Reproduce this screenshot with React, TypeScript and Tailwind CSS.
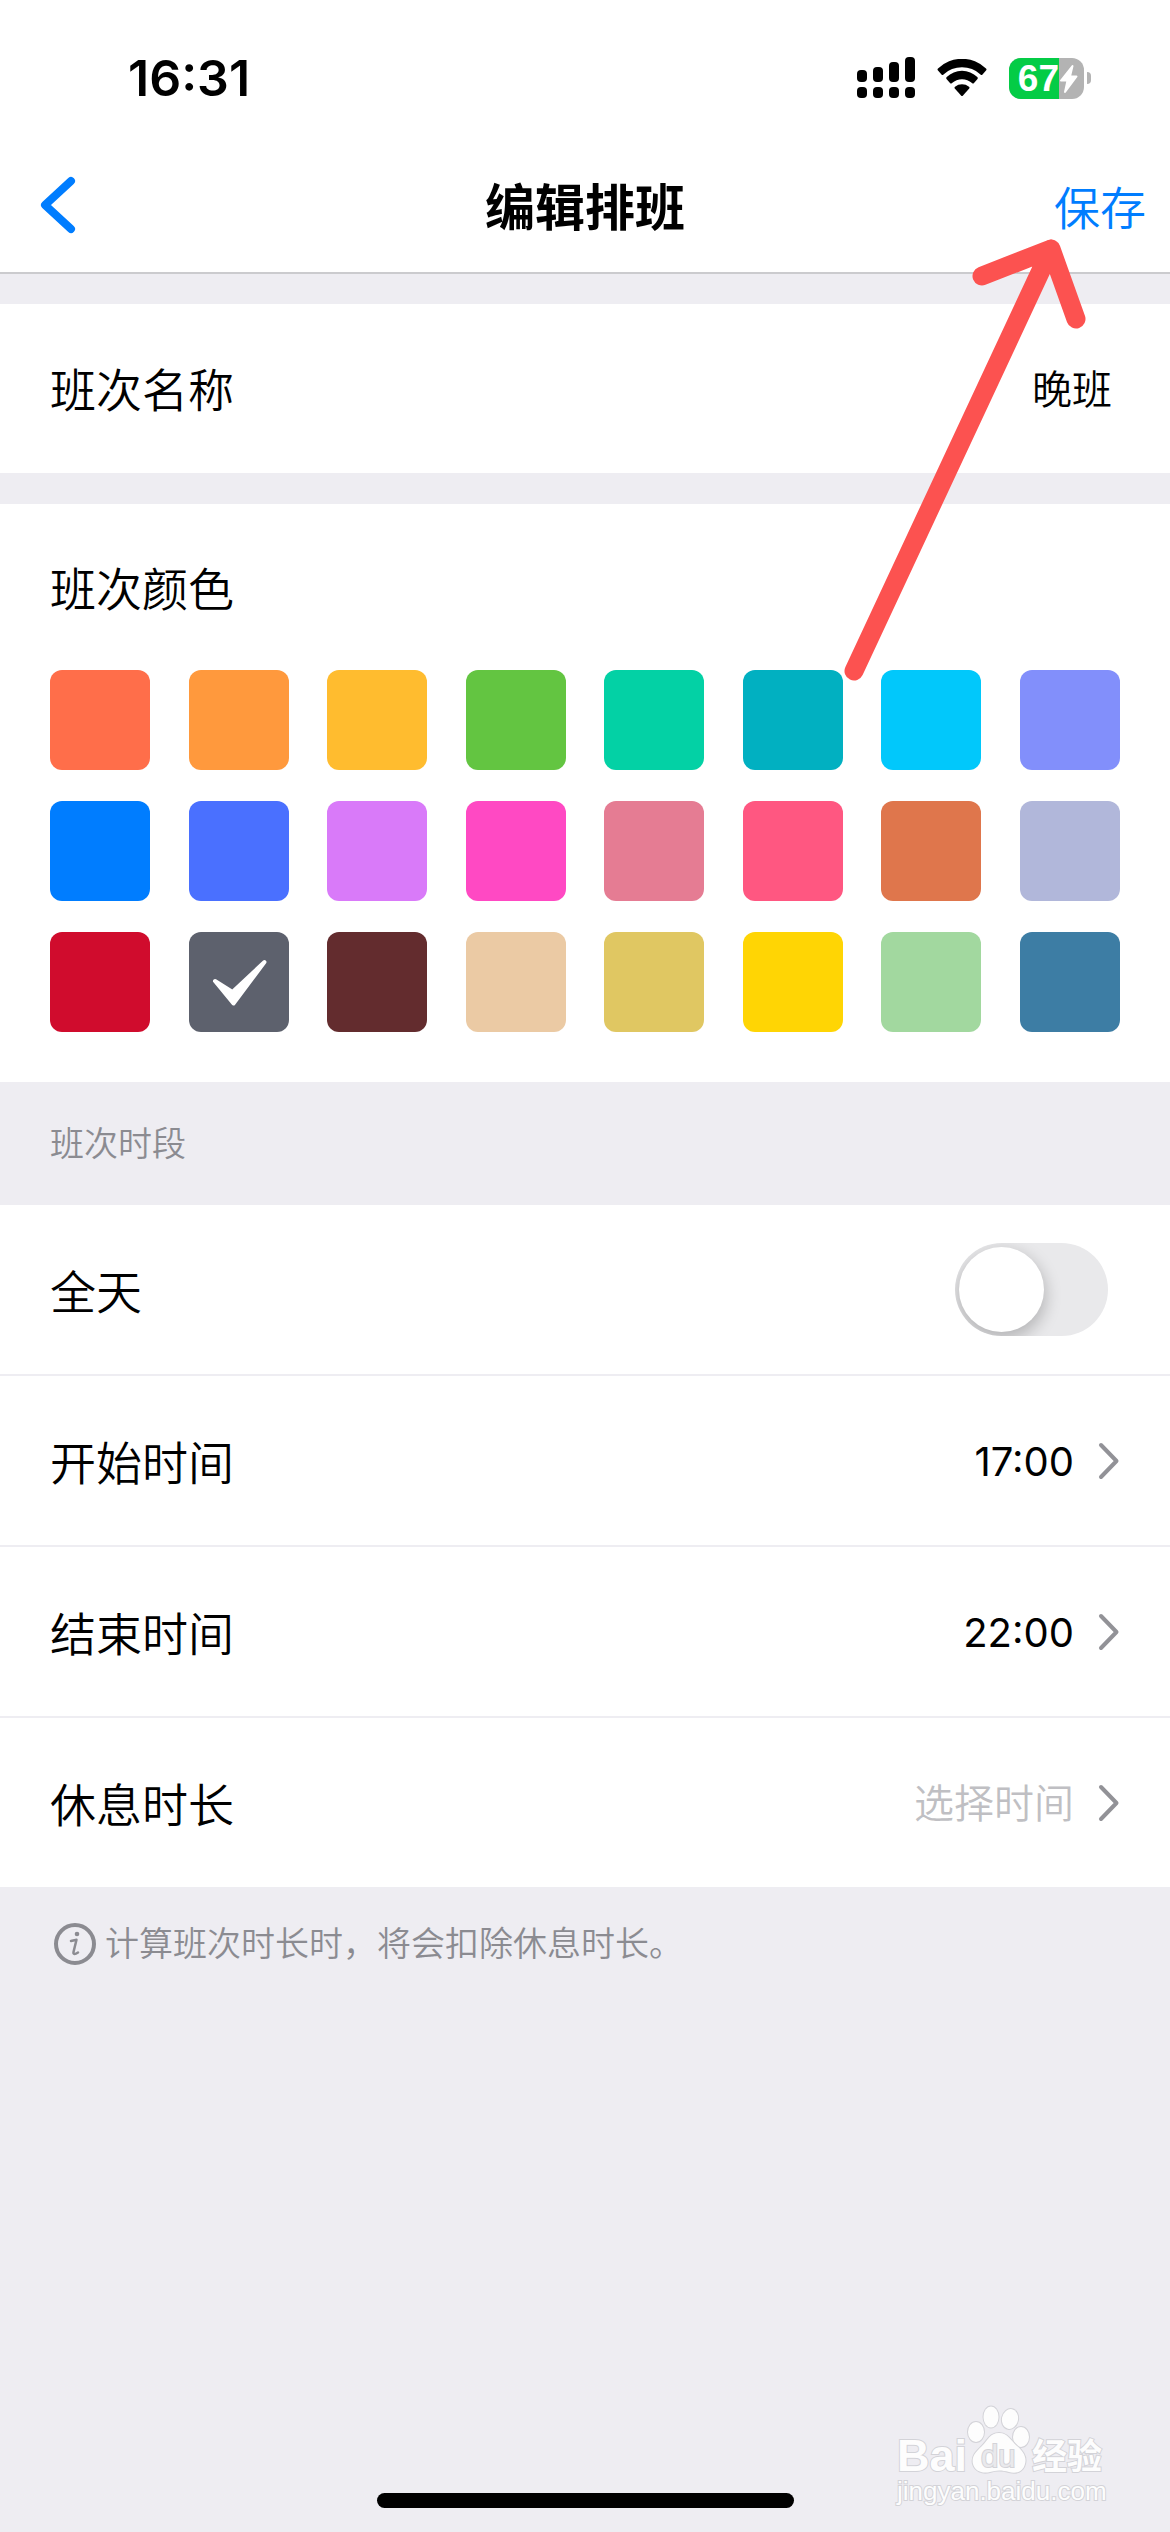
import { useState } from "react";
import type { ReactNode } from "react";
import { clsx } from "clsx";

const COLORS = [
  { name: "珊瑚红", className: "bg-[#ff6e4a]" },
  { name: "橙色", className: "bg-[#ff993d]" },
  { name: "琥珀", className: "bg-[#ffbc2f]" },
  { name: "绿色", className: "bg-[#63c541]" },
  { name: "薄荷绿", className: "bg-[#03d1a5]" },
  { name: "青色", className: "bg-[#01b0c1]" },
  { name: "天蓝", className: "bg-[#01c8fb]" },
  { name: "浅紫蓝", className: "bg-[#828ffb]" },
  { name: "蓝色", className: "bg-[#007dff]" },
  { name: "靛蓝", className: "bg-[#4a70ff]" },
  { name: "紫色", className: "bg-[#d97af9]" },
  { name: "洋红", className: "bg-[#ff49c3]" },
  { name: "豆沙粉", className: "bg-[#e57c93]" },
  { name: "玫红", className: "bg-[#ff5781]" },
  { name: "赭色", className: "bg-[#df764c]" },
  { name: "灰紫", className: "bg-[#b1b7da]" },
  { name: "深红", className: "bg-[#d00c2d]" },
  { name: "深灰", className: "bg-[#5d616d]" },
  { name: "棕色", className: "bg-[#632c2e]" },
  { name: "米色", className: "bg-[#ebcaa4]" },
  { name: "土黄", className: "bg-[#e0c762]" },
  { name: "黄色", className: "bg-[#ffd504]" },
  { name: "浅绿", className: "bg-[#a2d89f]" },
  { name: "灰蓝", className: "bg-[#3d7da4]" },
];

function StatusBar() {
  return (
    <div className="flex h-[156px] items-center justify-between pr-[79px] pl-32">
      <span className="text-[50px] leading-none font-semibold">16:31</span>
      <div className="flex items-center gap-[22px]">
        <svg width="58" height="42" viewBox="0 0 58 42" aria-hidden="true">
          <rect x="0" y="13" width="10" height="12" rx="4" />
          <rect x="16" y="10" width="10" height="15" rx="4" />
          <rect x="32" y="5" width="10" height="20" rx="4" />
          <rect x="48" y="0" width="10" height="25" rx="4" />
          <rect x="0" y="30" width="10" height="11" rx="4" />
          <rect x="16" y="30" width="10" height="11" rx="4" />
          <rect x="32" y="30" width="10" height="11" rx="4" />
          <rect x="48" y="30" width="10" height="11" rx="4" />
        </svg>
        <svg width="50" height="38" viewBox="0 0 50 38" aria-hidden="true">
          <path d="M1 11.500Q0 10.500 1 9.500A34.500 34.500 0 0 1 49 9.500Q50 10.500 49 11.500L45.500 15.500Q44.500 16.500 43.500 15.500A27 27 0 0 0 6.500 15.500Q5.500 16.500 4.500 15.500Z" />
          <path d="M9.500 20Q8.700 19 9.700 18A22 22 0 0 1 40.300 18Q41.300 19 40.500 20L37 24Q36 25 35 24A15 15 0 0 0 15 24Q14 25 13 24Z" />
          <path d="M17.800 29.500Q17 28.500 18 27.700A11.500 11.500 0 0 1 32 27.700Q33 28.500 32.200 29.500L26 36.500Q25 37.500 24 36.500Z" />
        </svg>
        <div className="flex items-center gap-[3px]">
          <div className="flex h-[41px] w-[75px] overflow-hidden rounded-xl bg-[#b3b3b3]">
            <span className="flex w-[50px] items-center justify-end bg-[#04cc46] font-['Liberation_Sans',sans-serif] text-[37px] leading-none font-bold text-white">
              67
            </span>
            <svg width="20" height="41" viewBox="0 0 20 41" aria-hidden="true">
              <path
                d="M13.500 8L2 22.500H8.500L6 34L17.500 18.500H11Z"
                fill="#fff"
                stroke="#fff"
                strokeWidth="2"
                strokeLinejoin="round"
              />
            </svg>
          </div>
          <div className="h-3 w-1 rounded-r-full bg-[#b3b3b3]" />
        </div>
      </div>
    </div>
  );
}

function ChevronRight() {
  return (
    <svg width="22" height="38" viewBox="0 0 22 38" fill="none" aria-hidden="true">
      <path
        d="M3 3L18.500 19L3 35"
        stroke="#929297"
        strokeWidth="4"
        strokeLinecap="round"
        strokeLinejoin="round"
      />
    </svg>
  );
}

function TimeRow({ label, children }: { label: string; children: ReactNode }) {
  return (
    <button type="button" className="flex h-[169px] w-full items-center bg-white px-[50px]">
      <span className="grow pt-1 text-left text-[46px] leading-none">{label}</span>
      <span className="mr-6 pt-0.5 text-[40px] leading-none">{children}</span>
      <ChevronRight />
    </button>
  );
}

function PointerArrow() {
  return (
    <svg
      className="pointer-events-none absolute top-[230px] right-[70px]"
      width="270"
      height="460"
      viewBox="0 0 270 460"
      fill="none"
      aria-hidden="true"
    >
      <path
        d="M24 441L221 19M152 46L221 19L246 89"
        stroke="#fc5250"
        strokeWidth="19"
        strokeLinecap="round"
        strokeLinejoin="round"
      />
    </svg>
  );
}

function Watermark() {
  return (
    <svg
      className="pointer-events-none absolute right-[57px] bottom-[18px]"
      width="220"
      height="110"
      viewBox="0 0 220 110"
      fill="#fdfdfd"
      stroke="#d3d3d8"
      strokeWidth="2"
      paintOrder="stroke"
    >
      <text x="4" y="67" fontSize="45" fontWeight="700" className="font-['Liberation_Sans',sans-serif]">
        Bai
      </text>
      <ellipse cx="83" cy="28" rx="8" ry="10" />
      <ellipse cx="98" cy="13" rx="7.500" ry="10.500" />
      <ellipse cx="117" cy="15" rx="8" ry="10" transform="rotate(12 117 15)" />
      <ellipse cx="128" cy="33" rx="8" ry="10" />
      <path d="M106 29C115 29 118 37 124 42C130 47 134 53 132 60C130 68 123 70 116 68C109 66 103 66 97 68C89 70 82 67 80 60C78 52 84 47 89 42C95 36 97 29 106 29Z" />
      <text x="88" y="63" fontSize="31" fontWeight="400" fill="#e9e9ec" className="font-['Liberation_Sans',sans-serif]">
        du
      </text>
      <text x="139" y="65" fontSize="35" fontWeight="700" className="font-['Noto_Sans_CJK_SC',sans-serif]">
        经验
      </text>
      <text x="4" y="96" fontSize="26" fontWeight="400" className="font-['Liberation_Sans',sans-serif]">
        jingyan.baidu.com
      </text>
    </svg>
  );
}

export default function App() {
  const [name, setName] = useState("晚班");
  const [color, setColor] = useState("深灰");
  const [allDay, setAllDay] = useState(false);

  return (
    <div className="relative flex min-h-screen flex-col bg-[#eeedf2] font-['Inter','Noto_Sans_CJK_SC',sans-serif] font-[350] text-black">
      <header className="border-b-2 border-[#cbcbce] bg-white">
        <StatusBar />
        <div className="grid h-[116px] grid-cols-3 items-start px-6">
          <button type="button" aria-label="返回" className="mt-5 ml-3 justify-self-start">
            <svg width="44" height="58" viewBox="0 0 44 58" fill="none">
              <path
                d="M35 5L9 29L35 53"
                stroke="#007dff"
                strokeWidth="8"
                strokeLinecap="round"
                strokeLinejoin="round"
              />
            </svg>
          </button>
          <h1 className="mt-6 text-center text-[50px] leading-[56px] font-bold">编辑排班</h1>
          <button type="button" className="mt-6 justify-self-end text-[46px] leading-[56px] text-[#007dff]">
            保存
          </button>
        </div>
      </header>

      <label className="mt-[30px] flex h-[169px] items-center bg-white pr-[58px] pl-[50px]">
        <span className="pt-0.5 text-[46px] leading-none">班次名称</span>
        <input
          type="text"
          value={name}
          onChange={(e) => setName(e.target.value)}
          className="min-w-0 grow bg-transparent pb-1 text-right text-[40px] leading-none outline-none"
        />
      </label>

      <fieldset className="mt-[31px] bg-white px-[50px] pt-[60px] pb-[50px]">
        <legend className="float-left text-[46px] leading-[50px]">班次颜色</legend>
        <div className="clear-both grid grid-cols-[repeat(8,100px)] justify-between gap-y-[31px] pt-14">
          {COLORS.map((item) => (
            <label key={item.name} className={clsx("relative size-[100px] rounded-xl", item.className)}>
              <input
                type="radio"
                name="shift-color"
                aria-label={item.name}
                checked={color === item.name}
                onChange={() => setColor(item.name)}
                className="block size-full appearance-none rounded-xl"
              />
              {color === item.name && (
                <svg className="pointer-events-none absolute inset-0" viewBox="0 0 100 100" aria-hidden="true">
                  <path
                    d="M26 49L43.500 60L75.500 30L44.500 71.500Z"
                    fill="#fff"
                    stroke="#fff"
                    strokeWidth="4"
                    strokeLinejoin="round"
                  />
                </svg>
              )}
            </label>
          ))}
        </div>
      </fieldset>

      <section>
        <h2 className="flex h-[123px] items-center px-[50px] text-[34px] leading-none font-[350] text-[#8b8b91]">
          班次时段
        </h2>
        <div className="flex flex-col gap-0.5">
          <label className="flex h-[169px] items-center justify-between bg-white pr-[62px] pl-[50px]">
            <span className="pt-1 text-[46px] leading-none">全天</span>
            <span className="relative h-[93px] w-[153px] overflow-hidden rounded-full bg-[#e9e9eb]">
              <input
                type="checkbox"
                role="switch"
                checked={allDay}
                onChange={(e) => setAllDay(e.target.checked)}
                className="peer block size-full appearance-none rounded-full checked:bg-[#34c759]"
              />
              <span className="pointer-events-none absolute top-1 left-1 size-[85px] rounded-full bg-white shadow-[0_6px_16px_2px_rgba(0,0,0,0.22)] peer-checked:left-16" />
            </span>
          </label>
          <TimeRow label="开始时间">
            <span className="font-normal">17:00</span>
          </TimeRow>
          <TimeRow label="结束时间">
            <span className="font-normal">22:00</span>
          </TimeRow>
          <TimeRow label="休息时长">
            <span className="text-[#bfbfc3]">选择时间</span>
          </TimeRow>
        </div>
        <p className="flex items-center gap-2 px-[53px] pt-[34px] text-[34px] leading-[46px] text-[#8b8b91]">
          <svg width="44" height="44" viewBox="0 0 44 44" fill="none" aria-hidden="true">
            <circle cx="22" cy="22" r="19" stroke="#8b8b91" strokeWidth="4" />
            <circle cx="24" cy="12" r="2.300" fill="#8b8b91" />
            <path
              d="M18 19C20 18.500 22 18 23.500 17.800L20.500 30C20 32.500 22 32.500 25 30.500"
              stroke="#8b8b91"
              strokeWidth="2.500"
              strokeLinecap="round"
              strokeLinejoin="round"
            />
          </svg>
          计算班次时长时，将会扣除休息时长。
        </p>
      </section>

      <div className="mt-auto mb-6 h-[15px] w-[417px] self-center rounded-full bg-black" />
      <PointerArrow />
      <Watermark />
    </div>
  );
}
